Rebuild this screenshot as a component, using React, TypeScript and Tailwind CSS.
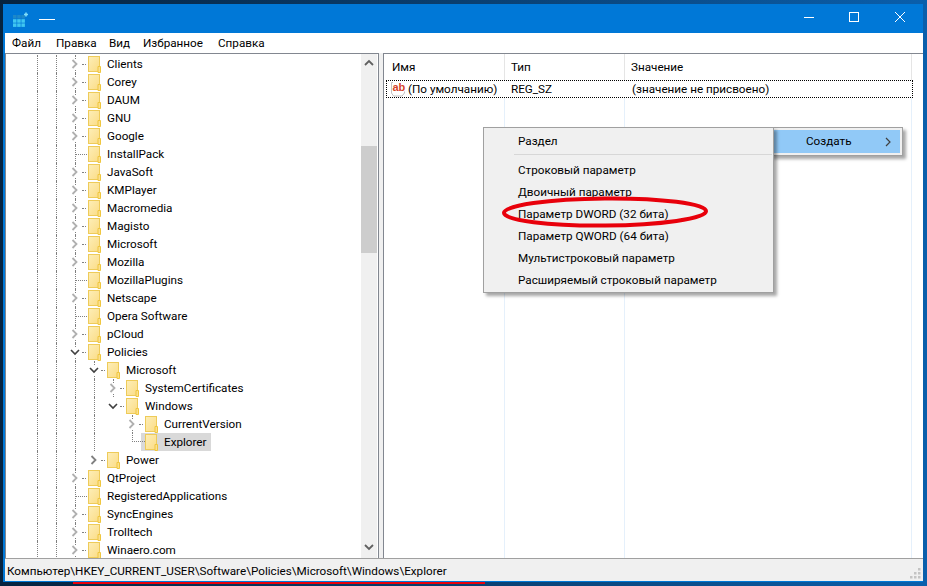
const font = "font-['Roboto','Noto_Sans',sans-serif]";

type Node = { name: string; depth: number; open?: boolean; leaf?: boolean; sel?: boolean; guides: number[] };

const G0 = [0, 1, 2];
const rows: Node[] = [
  ...["Clients", "Corey", "DAUM", "GNU", "Google"].map((name) => ({ name, depth: 0, guides: G0 })),
  { name: "InstallPack", depth: 0, leaf: true, guides: G0 },
  ...["JavaSoft", "KMPlayer", "Macromedia", "Magisto", "Microsoft", "Mozilla"].map((name) => ({ name, depth: 0, guides: G0 })),
  { name: "MozillaPlugins", depth: 0, leaf: true, guides: G0 },
  { name: "Netscape", depth: 0, guides: G0 },
  { name: "Opera Software", depth: 0, leaf: true, guides: G0 },
  { name: "pCloud", depth: 0, guides: G0 },
  { name: "Policies", depth: 0, open: true, guides: G0 },
  { name: "Microsoft", depth: 1, open: true, guides: [0, 1, 2, 3] },
  { name: "SystemCertificates", depth: 2, guides: [0, 1, 2, 3, 4] },
  { name: "Windows", depth: 2, open: true, guides: [0, 1, 2, 3] },
  { name: "CurrentVersion", depth: 3, guides: [0, 1, 2, 3, 5] },
  { name: "Explorer", depth: 3, leaf: true, sel: true, guides: [0, 1, 2, 3] },
  { name: "Power", depth: 1, guides: [0, 1, 2] },
  { name: "QtProject", depth: 0, guides: G0 },
  { name: "RegisteredApplications", depth: 0, leaf: true, guides: G0 },
  { name: "SyncEngines", depth: 0, guides: G0 },
  { name: "Trolltech", depth: 0, guides: G0 },
  { name: "Winaero.com", depth: 0, guides: G0 },
];

function Folder() {
  return (
    <svg width="13" height="17" viewBox="0 0 13 17" className="shrink-0">
      <defs>
        <linearGradient id="fg" x1="0" y1="0" x2="1" y2="1">
          <stop offset="0" stopColor="#fdeeb8" />
          <stop offset="1" stopColor="#fbdc85" />
        </linearGradient>
      </defs>
      <rect x="0.5" y="0.5" width="11" height="15" fill="url(#fg)" stroke="#eecb59" />
      <path d="M10 16.5h2.5v-6h-2.5z" fill="#fbe08e" stroke="#efc63f" />
    </svg>
  );
}

function Chevron({ open, dark }: { open?: boolean; dark?: boolean }) {
  return open ? (
    <svg width="10" height="10" viewBox="0 0 10 10">
      <path d="M1 3l4 4 4-4" fill="none" stroke="#404040" strokeWidth="1.6" />
    </svg>
  ) : (
    <svg width="10" height="10" viewBox="0 0 10 10">
      <path d="M2.5 1l4 4-4 4" fill="none" stroke={dark ? "#808080" : "#b0b0b0"} strokeWidth="1.8" />
    </svg>
  );
}

function Row({ n }: { n: Node }) {
  const cols = [0, 1, 2, 3, 4, 5];
  const nodeCol = 2 + n.depth;
  const childConnector = n.name === "Explorer";
  return (
    <div className="flex h-[18px] shrink-0 items-center pl-[31px]">
      {cols.slice(0, nodeCol).map((c) => (
        <div key={c} className={`h-full w-[19px] shrink-0 ${n.guides.includes(c) ? "border-l border-dotted border-[#808080]" : ""}`} />
      ))}
      <div className="relative flex h-full w-[13px] shrink-0 items-center">
        {childConnector ? (
          <div className="absolute left-0 top-0 h-[9px] w-full border-b border-l border-dotted border-[#808080]" />
        ) : (
          <div className={`absolute left-0 top-0 h-full ${n.guides.includes(nodeCol) ? "border-l border-dotted border-[#808080]" : ""}`} />
        )}
        {n.leaf && !childConnector && <div className="absolute left-0 top-[9px] w-[12px] border-t border-dotted border-[#808080]" />}
        {!n.leaf && (
          <>
            <div className="absolute left-[7px] top-[9px] w-[4px] border-t border-dotted border-[#808080]" />
            <div className="absolute -left-[5px] top-[4px] flex h-[10px] w-[10px] items-center justify-center bg-white">
              <Chevron open={n.open} dark={n.depth === 1 && !n.open} />
            </div>
          </>
        )}
      </div>
      <div className={`flex h-full items-center ${n.sel ? "-ml-[4px] bg-[#d9d9d9] pl-[4px] pr-[4px]" : ""}`}>
        <Folder />
        <span className="ml-[6px] whitespace-nowrap text-[#000]">{n.name}</span>
      </div>
    </div>
  );
}

function AbIcon() {
  return (
    <svg width="16" height="17" viewBox="0 0 16 17" className="shrink-0">
      <path d="M1.5 1.5h13v10.5l-2.5 3h-8.5l-2-3z" fill="#fff" stroke="#c4c4c4" />
      <rect x="3" y="1" width="12" height="9.5" fill="#fff" />
      <text x="2.4" y="10" fontSize="11" fontWeight="700" fill="#d5432a" fontFamily="Liberation Sans, sans-serif">ab</text>
    </svg>
  );
}

const items = ["Строковый параметр", "Двоичный параметр", "Параметр DWORD (32 бита)", "Параметр QWORD (64 бита)", "Мультистроковый параметр", "Расширяемый строковый параметр"];

export default function App() {
  return (
    <div className={`relative flex h-[586px] w-[927px] flex-col overflow-hidden bg-gradient-to-r from-[#06233f] via-[#0a3f70] to-[#0a5fac] pl-[3px] pr-[4px] pt-[4px] text-[11.7px] leading-[16px] text-black ${font}`}>
      <div className="flex h-[578px] flex-col bg-[#0078d7] pl-[2px]">
        {/* title */}
        <div className="flex h-[29px] shrink-0 items-center">
          <svg width="16" height="16" viewBox="0 0 16 16" className="ml-[8px] mt-[2px]">
            <g fill="#3fc6f0">
              <rect x="0" y="3" width="3.5" height="3.5" fill="#1e88c8" /><rect x="4.2" y="3" width="3.5" height="3.5" fill="#1e88c8" /><rect x="8.4" y="3" width="3.5" height="3.5" fill="#1e88c8" />
              <rect x="0" y="7.2" width="3.5" height="3.5" /><rect x="4.2" y="7.2" width="3.5" height="3.5" /><rect x="8.4" y="7.2" width="3.5" height="3.5" />
              <rect x="0" y="11.4" width="3.5" height="3.5" /><rect x="4.2" y="11.4" width="3.5" height="3.5" /><rect x="8.4" y="11.4" width="3.5" height="3.5" />
            </g>
            <path d="M11 2.5h4M13 .5v4" stroke="#7fdcf8" strokeWidth="1.6" />
          </svg>
          <div className="ml-[10px] mt-[1px] h-[1px] w-[16px] bg-white" />
          <div className="ml-auto flex h-full items-center text-white">
            <svg width="12" height="12" viewBox="0 0 12 12" className="mr-[33px] -mt-[3px]"><path d="M1 6.5h10" stroke="#fff" /></svg>
            <svg width="12" height="12" viewBox="0 0 12 12" className="mr-[34px] -mt-[3px]"><rect x="1.5" y="1.5" width="9" height="9" fill="none" stroke="#fff" /></svg>
            <svg width="12" height="12" viewBox="0 0 12 12" className="mr-[17px] -mt-[3px]"><path d="M1 1l10 10M11 1L1 11" stroke="#fff" /></svg>
          </div>
        </div>
        {/* menu */}
        <div className="flex h-[20px] shrink-0 items-center bg-white pl-[7px] text-[#000]">
          <span className="w-[44px]">Файл</span>
          <span className="w-[53px]">Правка</span>
          <span className="w-[34px]">Вид</span>
          <span className="w-[75px]">Избранное</span>
          <span>Справка</span>
        </div>
        {/* panes */}
        <div className="flex h-[505px] shrink-0 bg-[#f0f0f0]">
          <div className="flex h-full w-[374px] shrink-0 overflow-hidden border-x border-t border-[#828790] bg-white">
            <div className="flex h-full min-w-0 flex-1 flex-col overflow-hidden pt-[1px]">
              {rows.map((n, i) => (
                <Row key={i} n={n} />
              ))}
            </div>
            <div className="mr-[1px] flex h-full w-[16px] shrink-0 flex-col bg-[#f0f0f0]">
              <div className="flex h-[17px] items-center justify-center">
                <svg width="10" height="8" viewBox="0 0 10 8"><path d="M1 6l4-4 4 4" fill="none" stroke="#606060" strokeWidth="1.8" /></svg>
              </div>
              <div className="mt-[75px] h-[107px] bg-[#cdcdcd]" />
              <div className="flex-1" />
              <div className="flex h-[17px] items-center justify-center pb-[5px]">
                <svg width="10" height="8" viewBox="0 0 10 8"><path d="M1 2l4 4 4-4" fill="none" stroke="#606060" strokeWidth="1.8" /></svg>
              </div>
            </div>
          </div>
          <div className="w-[4px] shrink-0" />
          <div className="flex h-full min-w-0 flex-1 border-l border-t border-[#828790] bg-white">
            <div className="flex h-full flex-1 flex-col pl-[2px]">
              <div className="flex h-[26px] shrink-0">
                <div className="flex h-full w-[119px] items-center border-r border-[#e5e5e5] pl-[6px]">Имя</div>
                <div className="flex h-full w-[120px] items-center border-r border-[#e5e5e5] pl-[6px]">Тип</div>
                <div className="flex h-full w-[287px] items-center border-r border-[#e5e5e5] pl-[6px]">Значение</div>
              </div>
              <div className="flex h-[18px] w-[527px] shrink-0 items-center border border-dotted border-black">
                <div className="flex w-[118px] items-center pl-[3px]">
                  <AbIcon />
                  <span className="ml-[2px] whitespace-nowrap">(По умолчанию)</span>
                </div>
                <div className="w-[120px] pl-[6px]">REG_SZ</div>
                <div className="whitespace-nowrap pl-[7px]">(значение не присвоено)</div>
              </div>
              <div className="flex flex-1">
                <div className="w-[119px] border-r border-[#e5f0fb]" />
                <div className="w-[120px] border-r border-[#e5f0fb]" />
                <div className="w-[287px] border-r border-[#e5f0fb]" />
              </div>
            </div>
          </div>
        </div>
        {/* status */}
        <div className="relative flex h-[23px] shrink-0 items-center border-t border-[#a0a0a0] bg-[#f0f0f0] pl-[2px] pt-[2px]">
          <span className="whitespace-nowrap">Компьютер\HKEY_CURRENT_USER\Software\Policies\Microsoft\Windows\Explorer</span>
          <svg width="12" height="12" viewBox="0 0 12 12" className="ml-auto mr-[1px] mt-[6px]">
            <g fill="#c4c4c4">
              <rect x="8" y="0" width="2.5" height="2.5" /><rect x="4" y="4" width="2.5" height="2.5" /><rect x="8" y="4" width="2.5" height="2.5" />
              <rect x="0" y="8" width="2.5" height="2.5" /><rect x="4" y="8" width="2.5" height="2.5" /><rect x="8" y="8" width="2.5" height="2.5" />
            </g>
          </svg>
        </div>
      </div>

      {/* red underline */}
      <div className="absolute left-[73px] top-[582px] h-[2px] w-[412px] bg-[#e8000b]" />

      {/* submenu */}
      <div className="absolute left-[770px] top-[127px] h-[29px] w-[133px] border border-[#a0a0a0] bg-[#f0f0f0] p-[2px] shadow-[3px_3px_3px_rgba(0,0,0,0.35)]">
        <div className="flex h-[23px] items-center bg-[#91c9f7] pl-[33px] text-[#000]">
          <span className="-mt-[1px]">Создать</span>
          <svg width="8" height="10" viewBox="0 0 8 10" className="ml-auto mr-[8px]"><path d="M2 1l4 4-4 4" fill="none" stroke="#404040" strokeWidth="1.2" /></svg>
        </div>
      </div>

      {/* context menu */}
      <div className="absolute left-[483px] top-[127px] w-[291px] border border-[#a0a0a0] bg-[#f0f0f0] pb-[1px] pt-[2px] shadow-[3px_3px_3px_rgba(0,0,0,0.35)]">
        <div className="flex h-[22px] items-center pl-[34px]">Раздел</div>
        <div className="ml-[30px] mr-[1px] mt-[2px] h-[1px] bg-[#d7d7d7]" />
        <div className="pt-[4px]">
          {items.map((t) => (
            <div key={t} className="flex h-[22px] items-center whitespace-nowrap pl-[34px]">{t}</div>
          ))}
        </div>
      </div>

      {/* red ellipse */}
      <svg className="absolute left-[495px] top-[190px]" width="220" height="44" viewBox="0 0 220 44">
        <ellipse cx="110" cy="22" rx="101" ry="13.5" fill="none" stroke="#e8000b" strokeWidth="4" transform="rotate(-0.5 110 22)" />
      </svg>
    </div>
  );
}
